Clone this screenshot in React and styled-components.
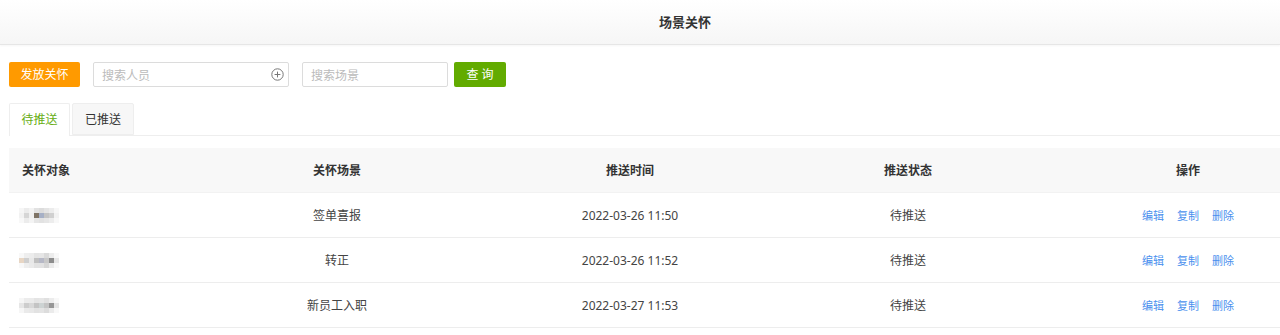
import React from 'react';
import styled, { createGlobalStyle } from 'styled-components';

const GlobalStyle = createGlobalStyle`
  html, body {
    margin: 0;
    padding: 0;
    background: #fff;
    overflow: hidden;
  }
  body {
    font-family: "Noto Sans", "Noto Sans CJK SC", sans-serif;
    font-size: 12px;
    color: #333;
  }
`;

// blurred name placeholders, 8 x 3 blocks each
const mosaics = [
  ['#f6f6f6', '#ececec', '#f3f3f3', '#e2e2e2', '#dcdcdc', '#e4e4e4', '#ececec', '#f7f7f7',
   '#f2f2f2', '#d6d6d6', '#f0f0f0', '#7f7466', '#a6b0c6', '#c4c4c4', '#d0d0d0', '#f2f2f2',
   '#f8f8f8', '#ececec', '#f4f4f4', '#e6e6e6', '#e2e2e2', '#e6e6e6', '#ededed', '#f8f8f8'],
  ['#f8f8f8', '#eeeeee', '#ececec', '#e4e4e4', '#e6e6e6', '#dadada', '#ececec', '#f8f8f8',
   '#e8d6c4', '#cfcfcf', '#e8e8e8', '#c0c0c0', '#b6b8c6', '#c8c8c8', '#8c8c8c', '#e6e6e6',
   '#f8f8f8', '#eeeeee', '#eaeaea', '#e2e2e2', '#e2e2e2', '#d6d6d6', '#eaeaea', '#f8f8f8'],
  ['#f6f6f6', '#ececec', '#ebebeb', '#e4e4e4', '#e6e6e6', '#e0e0e0', '#ececec', '#f8f8f8',
   '#e6e6e6', '#cdcdcd', '#d8d8d8', '#c4c4c4', '#cdd3d3', '#c4c4c4', '#969696', '#e4e4e4',
   '#f6f6f6', '#eaeaea', '#e8e8e8', '#e2e2e2', '#e4e4e4', '#dcdcdc', '#ebebeb', '#f8f8f8'],
];

const rows = [
  { id: 1, scene: '签单喜报', time: '2022-03-26 11:50', status: '待推送' },
  { id: 2, scene: '转正', time: '2022-03-26 11:52', status: '待推送' },
  { id: 3, scene: '新员工入职', time: '2022-03-27 11:53', status: '待推送' },
];

function PlusCircle() {
  return (
    <svg width="13" height="13" viewBox="0 0 13 13" fill="none" stroke="#777" strokeWidth="1">
      <circle cx="6.5" cy="6.5" r="5.7" />
      <path d="M6.5 3.6v5.8M3.6 6.5h5.8" />
    </svg>
  );
}

function App() {
  return (
    <Page>
      <GlobalStyle />
      <TopBar>场景关怀</TopBar>
      <Content>
        <Toolbar>
          <Button $bg="#ff9a00">发放关怀</Button>
          <InputBox $w={196}>
            <span>搜索人员</span>
            <PlusCircle />
          </InputBox>
          <InputBox $w={146}>
            <span>搜索场景</span>
          </InputBox>
          <Button $bg="#62ab00" $w={52}>查 询</Button>
        </Toolbar>

        <Tabs>
          <Tab $active>待推送</Tab>
          <Tab>已推送</Tab>
        </Tabs>

        <TableWrap>
          <Table>
            <HeadRow>
              <Cell $left>关怀对象</Cell>
              <Cell>关怀场景</Cell>
              <Cell>推送时间</Cell>
              <Cell>推送状态</Cell>
              <Cell>操作</Cell>
            </HeadRow>
            {rows.map((r, i) => (
              <Row key={r.id}>
                <Cell $left>
                  <Mosaic>
                    {mosaics[i].map((c, j) => (
                      <Px key={j} $c={c} />
                    ))}
                  </Mosaic>
                </Cell>
                <Cell>{r.scene}</Cell>
                <Cell>{r.time}</Cell>
                <Cell>{r.status}</Cell>
                <Cell>
                  <Actions>
                    <LinkText>编辑</LinkText>
                    <LinkText>复制</LinkText>
                    <LinkText>删除</LinkText>
                  </Actions>
                </Cell>
              </Row>
            ))}
          </Table>
        </TableWrap>
      </Content>
    </Page>
  );
}

const Page = styled.div`
  width: 1280px;
  height: 335px;
  overflow: hidden;
`;

const TopBar = styled.header`
  height: 44px;
  line-height: 44px;
  padding-left: 90px;
  text-align: center;
  font-size: 13px;
  font-weight: bold;
  color: #333;
  background: linear-gradient(#ffffff, #f6f6f6);
  border-bottom: 1px solid #e6e6e6;
  box-shadow: 0 1px 2px rgba(0, 0, 0, 0.04);
`;

const Content = styled.main`
  padding: 17px 0 0 9px;
`;

const Toolbar = styled.div`
  display: flex;
  align-items: center;
  height: 25px;
`;

const Button = styled.div`
  width: ${(p) => p.$w || 71}px;
  height: 25px;
  line-height: 25px;
  margin-right: ${(p) => (p.$w ? 0 : 13)}px;
  text-align: center;
  color: #fff;
  font-size: 12px;
  border-radius: 2px;
  background: ${(p) => p.$bg};
`;

const InputBox = styled.div`
  box-sizing: border-box;
  width: ${(p) => p.$w}px;
  height: 25px;
  margin-right: ${(p) => (p.$w > 150 ? 13 : 6)}px;
  padding: 0 4px 0 8px;
  display: flex;
  align-items: center;
  justify-content: space-between;
  border: 1px solid #dcdcdc;
  border-radius: 2px;
  background: #fff;
  color: #bbb;
  font-size: 12px;
  svg {
    display: block;
  }
`;

const Tabs = styled.div`
  display: flex;
  gap: 2px;
  margin-top: 16px;
  border-bottom: 1px solid #eee;
  height: 32px;
`;

const Tab = styled.div`
  box-sizing: border-box;
  width: ${(p) => (p.$active ? 61 : 62)}px;
  height: ${(p) => (p.$active ? 33 : 32)}px;
  line-height: 32px;
  text-align: center;
  font-size: 12px;
  border: 1px solid #eee;
  border-bottom: ${(p) => (p.$active ? 'none' : '1px solid #eee')};
  background: ${(p) => (p.$active ? '#fff' : '#f7f7f7')};
  color: ${(p) => (p.$active ? '#67ad12' : '#333')};
  border-radius: 2px 2px 0 0;
`;

const TableWrap = styled.div`
  margin-top: 12px;
  overflow: hidden;
`;

const Table = styled.div`
  width: 1333px;
`;

const HeadRow = styled.div`
  display: grid;
  grid-template-columns: 187px 282px 304px 252px 308px;
  height: 44px;
  align-items: center;
  background: #f8f8f8;
  font-weight: bold;
  color: #333;
  border-bottom: 1px solid #f2f2f2;
`;

const Row = styled.div`
  display: grid;
  grid-template-columns: 187px 282px 304px 252px 308px;
  height: 44px;
  align-items: center;
  border-bottom: 1px solid #ededed;
  color: #444;
`;

const Cell = styled.div`
  text-align: ${(p) => (p.$left ? 'left' : 'center')};
  padding-left: ${(p) => (p.$left ? 13 : 0)}px;
  font-size: 12px;
`;

const Mosaic = styled.div`
  display: grid;
  grid-template-columns: repeat(8, 5px);
  grid-auto-rows: 5px;
  width: 40px;
  margin-left: -3px;
  filter: blur(0.5px);
`;

const Px = styled.span`
  background: ${(p) => p.$c};
`;

const Actions = styled.div`
  display: flex;
  justify-content: center;
  gap: 13px;
`;

const LinkText = styled.span`
  color: #4a90ee;
  font-size: 11px;
`;

export default App;
